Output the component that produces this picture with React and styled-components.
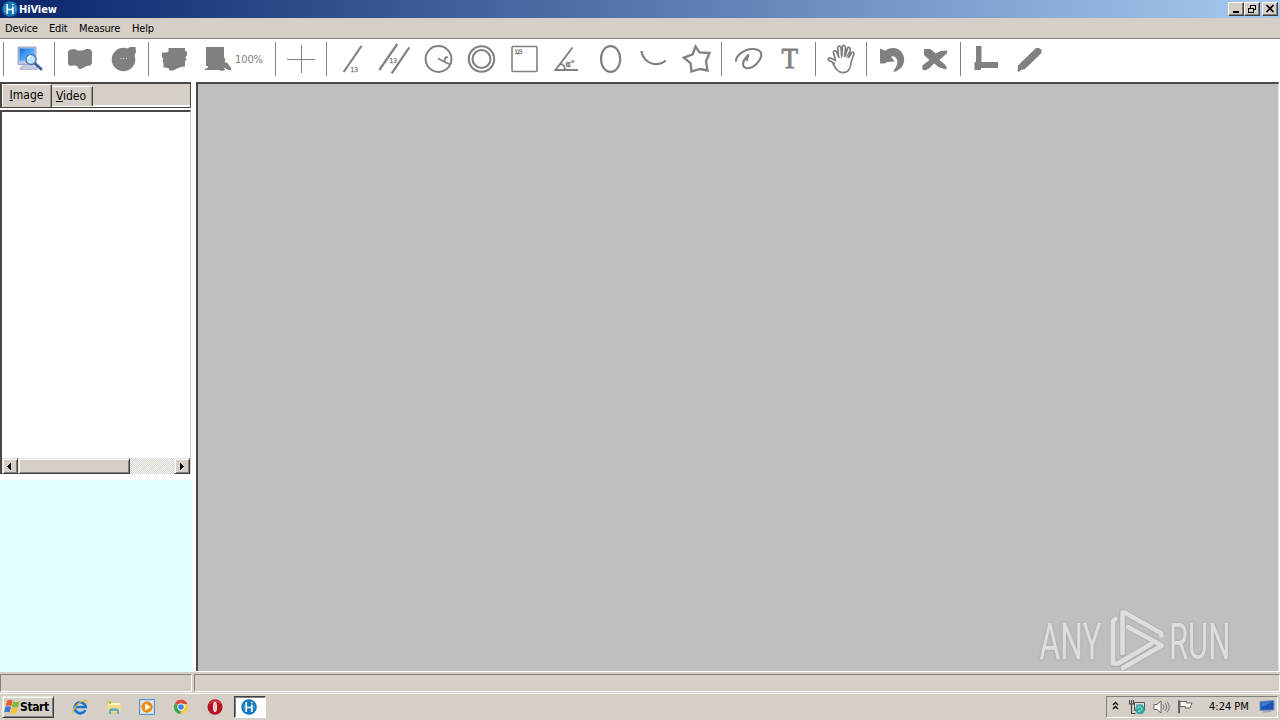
import React from "react";
import styled, { createGlobalStyle, css } from "styled-components";

const FACE = "#d5cfc7";
const INK = "#808080";
const UI = '"DejaVu Sans Condensed", "DejaVu Sans", "Noto Sans", sans-serif';

const Global = createGlobalStyle`
  * { box-sizing: border-box; }
  html, body { margin: 0; padding: 0; }
  body { width: 1280px; height: 720px; overflow: hidden; background: #fff; font-family: ${UI}; font-size: 11px; color: #000; }
  svg { display: block; flex: none; }
`;

const Desktop = styled.div`
  width: 1280px;
  height: 720px;
  display: flex;
  flex-direction: column;
`;

const TitleBar = styled.header`
  height: 18px;
  flex: none;
  display: flex;
  align-items: center;
  padding: 0 2px;
  background: linear-gradient(90deg, #0a246a, #a6caf0);
`;

const Title = styled.h1`
  flex: 1;
  margin: 0 0 0 1px;
  font: bold 11px/16px ${UI};
  padding-top: 1px;
  letter-spacing: -0.1px;
  color: #fff;
`;

const CaptionButton = styled.button`
  width: 16px;
  height: 14px;
  padding: 0;
  margin-left: ${(p) => (p.$gap ? 2 : 0)}px;
  border: 1px solid;
  border-color: #fff #404040 #404040 #fff;
  box-shadow: inset -1px -1px #808080;
  background: ${FACE};
`;

const MenuBar = styled.nav`
  height: 21px;
  flex: none;
  display: flex;
  padding-left: 5px;
  background: ${FACE};
  border-bottom: 1px solid #857d7a;
`;

const MenuItem = styled.span`
  width: ${(p) => p.$w}px;
  line-height: 21px;
  letter-spacing: ${(p) => p.$ls || 0}px;
  white-space: nowrap;
`;

const ToolBar = styled.div`
  height: 43px;
  flex: none;
  display: flex;
  background: #fff;
`;

const Separator = styled.i`
  width: 1px;
  height: 34px;
  margin: 3px 4px 0 3px;
  background: #808080;
`;

const Tool = styled.button`
  display: flex;
  width: ${(p) => (p.$wide ? 76 : 43)}px;
  height: 43px;
  padding: 0;
  border: 0;
  background: none;
  color: ${INK};
  font: 11px/41px ${UI};
`;

const ZoomLabel = styled.span`
  margin-left: -4px;
  letter-spacing: -0.1px;
`;

const Body = styled.main`
  height: 590px;
  flex: none;
  display: flex;
`;

const SidePanel = styled.aside`
  width: 192px;
  margin-right: 4px;
  display: flex;
  flex-direction: column;
`;

const TabStrip = styled.div`
  width: 191px;
  height: 26px;
  display: flex;
  align-items: flex-start;
  border: solid #4b4646;
  border-width: 2px 1px 1px 2px;
  box-shadow: inset 0 -2px #fff;
  background: ${FACE};
`;

const Tab = styled.button`
  width: ${(p) => p.$w}px;
  height: ${(p) => (p.$on ? 23 : 20)}px;
  margin-top: ${(p) => (p.$on ? 0 : 2)}px;
  padding: 0;
  border: 0;
  border-top: 1px solid #fff;
  border-left: ${(p) => (p.$on ? 1 : 0)}px solid #fff;
  border-right: 1px solid #404040;
  box-shadow: inset -1px 0 #9d9892;
  background: ${FACE};
  font: 12px/${(p) => (p.$on ? 20 : 19)}px ${UI};
  padding-bottom: ${(p) => (p.$on ? 3 : 0)}px;
  padding-right: ${(p) => (p.$on ? 1 : 2)}px;
  letter-spacing: 0;
  color: #000;
  text-align: center;
`;

const ListBox = styled.div`
  width: 191px;
  height: 364px;
  margin-top: 2px;
  display: flex;
  flex-direction: column;
  justify-content: flex-end;
  border: solid #4b4646;
  border-width: 2px 1px 0 2px;
  border-right-color: #d4d0c8;
  background: #fff;
`;

const ScrollBar = styled.div`
  height: 16px;
  display: flex;
  background: repeating-conic-gradient(${FACE} 0 25%, #fff 0 50%) 0 0 / 2px 2px;
`;

const raised = css`
  border: 1px solid;
  border-color: #e8e4de #404040 #404040 #e8e4de;
  box-shadow: inset 1px 1px #fff, inset -1px -1px #808080;
  background: ${FACE};
`;

const ScrollButton = styled.button`
  width: 16px;
  height: 16px;
  padding: 0;
  ${raised}
`;

const Thumb = styled.div`
  width: 112px;
  margin-right: auto;
  ${raised}
`;

const Preview = styled.div`
  height: 192px;
  margin-top: auto;
  background: #e0ffff;
`;

const Canvas = styled.section`
  width: 1083px;
  height: 589px;
  border: solid #4b4747;
  border-width: 2px 1px 0 2px;
  border-right-color: #e4e1dc;
  background: #bfbfbf;
`;

const StatusBar = styled.footer`
  height: 21px;
  flex: none;
  display: flex;
  gap: 2px;
  padding: 2px 0 1px;
  background: ${FACE};
`;

const StatusPane = styled.div`
  width: ${(p) => p.$w}px;
  border: 1px solid;
  border-color: #858080 #fff #fff #858080;
`;

const TaskBar = styled.div`
  height: 27px;
  flex: none;
  display: flex;
  align-items: center;
  padding: 0 2px 1px;
  border-top: 1px solid #fff;
  background: ${FACE};
`;

const StartButton = styled.button`
  width: 52px;
  height: 22px;
  padding: 0 0 0 1px;
  margin-right: 18px;
  display: flex;
  align-items: center;
  ${raised}
  font: bold 12px/18px ${UI};
  letter-spacing: -0.4px;
  color: #000;
`;

const Launch = styled.a`
  width: 16px;
  margin-right: ${(p) => p.$gap || 18}px;
`;

const TaskWindow = styled.button`
  width: 32px;
  height: 22px;
  padding: 0 2px 0 0;
  display: flex;
  align-items: center;
  justify-content: center;
  border: 1px solid;
  border-color: #404040 #fff #fff #404040;
  box-shadow: inset 1px 1px #808080;
  background: #fff;
`;

const Tray = styled.div`
  width: 172px;
  height: 22px;
  margin-left: auto;
  padding-left: 5px;
  display: flex;
  align-items: center;
  border: 1px solid;
  border-color: #808080 #fff #fff #808080;
`;

const TrayIcon = styled.span`
  width: ${(p) => p.$w}px;
`;

const Clock = styled.time`
  width: 50px;
  letter-spacing: 0;
  white-space: nowrap;
`;

const Watermark = styled.div`
  position: absolute;
  left: 1030px;
  top: 604px;
`;

const Icon = ({ w = 43, children, ...rest }) => (
  <svg width={w} height="40" viewBox={`0 0 ${w} 40`} fill="none" stroke={INK} strokeWidth="2.500" {...rest}>
    {children}
  </svg>
);

const tiny = { fill: INK, stroke: INK, strokeWidth: 0.3, fontFamily: "DejaVu Sans Condensed, DejaVu Sans, sans-serif" };

const DeviceIcon = () => (
  <Icon stroke="none">
    <defs>
      <linearGradient id="scr" x1="0" y1="0" x2="1" y2="1">
        <stop offset="0" stopColor="#1668d8" /><stop offset=".5" stopColor="#48a5f5" /><stop offset="1" stopColor="#8fd4ff" />
      </linearGradient>
    </defs>
    <path d="M10 8h18v17.500H10z" fill="#bcc4dc" stroke="#8090b8" strokeWidth=".7" />
    <path d="M11.500 9.500h15V22h-15z" fill="url(#scr)" />
    <path d="M15 25.500h9l1 2 4 1v2H12v-2l3-1z" fill="#c6cbe2" stroke="#98a0c4" strokeWidth=".6" />
    <path d="m27.500 25 5.500 5" stroke="#3f5f9c" strokeWidth="3" strokeLinecap="round" />
    <circle cx="23" cy="20.500" r="5" fill="#bde8fc" stroke="#4e74b4" strokeWidth="1.300" />
    <path d="M20 20a3 3 0 0 1 3-3" stroke="#fff" strokeWidth="1.400" fill="none" />
  </Icon>
);

const OpenIcon = () => (
  <Icon stroke="none" fill={INK}>
    <path d="M9 12.500 11 10.500 16 10l2 1.500h6l3-1.500h4l2 2.500V24l-1.500 2.500-4 .5-2.500 1.500L21.500 30h-1.500l-2-3-3-.5-4 .5-2-2z" />
  </Icon>
);
const DiscIcon = () => (
  <Icon stroke="none" fill={INK}>
    <circle cx="21.500" cy="20.500" r="11.800" />
    <path d="M25 10l3-2h5.500l.5 5-2 4z" />
    <path d="M18.500 19h1v1h-1zM21 19h1v1h-1zM24 19h1v1h-1z" fill="#ddd" />
  </Icon>
);
const SaveIcon = () => (
  <Icon stroke="none" fill={INK}>
    <path d="M9 13.500h4.500l2-1V9h16.500v3l2 .5v4l-1.500 1.500 1 3-1.500 1v5.500L28 28l-4 1.500-3.500 2h-4l-1-2.500-5-.5v-4L9.500 22l1-2-1.500-2z" />
  </Icon>
);
const FitIcon = () => (
  <Icon stroke="none" fill={INK}>
    <path d="M10 8h18v10l1.500 3-1 2 3 1 3.500 5v2.500l-4-1-3-2 1 2.500-3 1-3-1H9V30l3-1.500V27h-2z" />
  </Icon>
);
const CrossIcon = () => (
  <Icon strokeWidth="1"><path d="M7 20.500h28M21.500 6v28" /></Icon>
);
const LineIcon = () => (
  <Icon strokeWidth="2.200"><path d="M30.500 7 12.700 33" /><text x="19.500" y="33" fontSize="6.500" {...tiny}>13</text></Icon>
);
const ParallelIcon = () => (
  <Icon strokeWidth="2.200"><path d="M23.300 5 5.300 31M35.300 8.300 17.700 34.300" /><text x="15.500" y="24" fontSize="6.500" {...tiny}>13</text></Icon>
);
const RadiusIcon = () => (
  <Icon strokeWidth="2">
    <circle cx="21.500" cy="20" r="12.900" />
    <path d="m21 19.500 12 6M28.500 18l-1 4M28 19.500c.5-1.500 1.500-1.500 3-1" strokeWidth="1.800" />
  </Icon>
);
const RingIcon = () => (
  <Icon strokeWidth="2.100"><circle cx="21.500" cy="20" r="12.700" /><circle cx="21.500" cy="20" r="9" /></Icon>
);
const SquareIcon = () => (
  <Icon strokeWidth="1.600"><rect x="9" y="7.500" width="25" height="25" rx="1" /><text x="11.500" y="14.500" fontSize="6" textLength="8" {...tiny}>123</text></Icon>
);
const AngleIcon = () => (
  <Icon strokeWidth="1.900">
    <path d="M26.500 8.500 9.500 31H32M14 25c3 0 5 2.500 5 6" />
    <text x="19.500" y="27.500" fontSize="8.500" fontWeight="bold" {...tiny}>α°</text>
  </Icon>
);
const EllipseIcon = () => (
  <Icon strokeWidth="2.200"><ellipse cx="21.600" cy="20" rx="9.600" ry="12.800" /></Icon>
);
const ArcIcon = () => (
  <Icon strokeWidth="2.200"><path d="M9.500 12C10 18 15 24 22 25c5 .5 8.500-.7 11.700-3.500" /></Icon>
);
const StarIcon = () => (
  <Icon strokeWidth="2.300"><path d="M20.500 7.500 24.500 13.500 34.500 14 31 22.300 32.500 31.500 25 30 16.500 32.500 15.700 24.300 8.800 18.700 17.700 15.300z" /></Icon>
);
const LassoIcon = () => (
  <Icon strokeWidth="2.100">
    <path d="M10 22.500C9.500 17 18 10 26.500 10c9 0 10.500 5 7 11C30 27 24.500 30 20 29c-4.500-1-3.500-7.500.5-11l2-2.500-2 6.500" />
  </Icon>
);
const TextIcon = () => (
  <Icon stroke="none">
    <text x="12.500" y="29.300" fontSize="30" textLength="16.500" lengthAdjust="spacingAndGlyphs" fill={INK} stroke={INK} strokeWidth=".8" fontFamily="Liberation Serif, serif">T</text>
  </Icon>
);
const HandIcon = () => (
  <Icon strokeWidth="1.700" strokeLinejoin="round">
    <path d="M14.500 24.500 8.500 21c-1-1 .5-2.500 2-2l5 2.500-2-8c-.3-2 2-2.500 3-.7l2 5-.8-9c0-2.300 2.800-2.300 3.200 0l1 8 .5-9c.3-2 3-1.600 3 .2v9l2-7.500c.7-2 3.200-1 2.800 1l-1.500 8 2.800-4.500c1.200-1.600 3-.5 2.300 1.200l-2.500 7.300c-.3 6-3 11.200-8 11.200-5.500 0-7.800-4.200-10.300-9.200z" />
    <path d="m17 13 2.500 6M21 14l.5 5M25 11l-1 7M29 13l-2.500 6" strokeWidth="1" />
  </Icon>
);
const UndoIcon = () => (
  <Icon stroke="none" fill={INK}>
    <path d="M9 9.500l5 2.200c7-4.500 14-2.700 17 2 3.500 5.500 2.500 11-1 15.300L25 32.500h-3c4.500-5.500 5.500-10 3-13.500-1.500-2-4-2-5-1l4 4.500-7.500.5-3 1.500H9z" />
  </Icon>
);
const DeleteIcon = () => (
  <Icon stroke="none" fill={INK}>
    <path d="M10 10h6.500l5.200 4.500 5-2.500 6-.5.700 2.500-8 7 5.500 4.500 2 3-1 2-6.500-2-5.400-4-5 5-4 2-2.600-1v-4l7-5.500-5.400-5z" />
  </Icon>
);
const CornerIcon = () => (
  <Icon stroke="none" fill={INK}><path d="M11 7h5.500v16H33v6H16v2H9.500v-8H11z" /></Icon>
);
const PencilIcon = () => (
  <Icon stroke="none" fill={INK}><path d="M28 9h3l2.500 2v3L17 30l-4 1-2 2-1.500-1 .5-5.500z" /></Icon>
);

const GROUPS = [
  [DeviceIcon],
  [OpenIcon, DiscIcon],
  [SaveIcon, FitIcon],
  [CrossIcon],
  [LineIcon, ParallelIcon, RadiusIcon, RingIcon, SquareIcon, AngleIcon, EllipseIcon, ArcIcon, StarIcon],
  [LassoIcon, TextIcon],
  [HandIcon],
  [UndoIcon, DeleteIcon],
  [CornerIcon, PencilIcon],
];

const AppLogo = () => (
  <svg width="16" height="16" viewBox="0 0 16 16">
    <circle cx="8" cy="8" r="7.800" fill="#1476b8" />
    <path d="M5.200 3v10M10.800 5.500V13M5.200 8.500h5.600M10.800 2.700v1.600" stroke="#fff" strokeWidth="1.700" fill="none" />
    <path d="M3 5.500v5M13 5.500v5" stroke="#69bce8" strokeWidth=".8" />
  </svg>
);

const WindowsFlag = () => (
  <svg width="16" height="16" viewBox="0 0 16 16">
    <path d="M3 1.700c2-1.200 3.700-1 5.700 0L7.300 7.300c-1.700-1-3.600-1-5.600 0z" fill="#e8602c" />
    <path d="M9.200 2.500c2 1 3.800 1 6.500-.5l-1.600 5.800c-2.200 1-4.200 1-6.200 0z" fill="#7fb83a" />
    <path d="M1.500 8c2-1 3.600-1 5.500 0l-1.500 5.500c-1.600-1-3.500-1-5.500 0z" fill="#3878cc" />
    <path d="M7.700 8.500c2 1 3.900 1 6.100 0L12.300 14c-2 1-4 1-6 0z" fill="#f6c330" />
  </svg>
);

const ExplorerIcon = () => (
  <svg width="16" height="16" viewBox="0 0 16 16" fill="none">
    <path d="M13.300 11A5.500 5.500 0 1 1 13.700 8H4" stroke="#1675cc" strokeWidth="2.700" />
    <path d="M12.800 10.500A5.500 5.500 0 0 1 3 7" stroke="#57b7ee" strokeWidth=".8" />
    <path d="M1.300 14.500C-.5 12 5 3.800 11.500 1.500c4-1.200 3.500 2 2.500 3.500" stroke="#e6b72f" strokeWidth="1.300" />
  </svg>
);
const FolderIcon = () => (
  <svg width="16" height="16" viewBox="0 0 16 16">
    <path d="M1 2h5l1 1.500h7V14H1z" fill="#e9c75f" />
    <path d="M2 4h12v5H2z" fill="#fff6c8" /><path d="M1 6h14v7.500H1z" fill="#f3dc86" />
    <path d="M3 15v-4l1.500-1.500h7L13 11v4h-2v-3H5v3z" fill="#59a9d9" />
    <path d="M3 4h2" stroke="#45a45c" />
  </svg>
);
const PlayerIcon = () => (
  <svg width="17" height="16" viewBox="0 0 17 16">
    <path d="M.5.500h15v15H.5z" fill="#b9d7f2" stroke="#5b92ca" />
    <path d="M2 2h12v12H2z" fill="#dcecf8" />
    <circle cx="8" cy="8" r="5.700" fill="#f28a13" /><path d="m6.200 4.600 5.600 3.400-5.600 3.400z" fill="#fff" />
  </svg>
);
const ChromeIcon = () => (
  <svg width="16" height="16" viewBox="0 0 16 16">
    <path d="M8 8 2 4.200A7 7 0 0 1 14.500 5H8z" fill="#de4936" />
    <path d="M8 8 14.500 5A7 7 0 0 1 7.500 15z" fill="#f8cc35" />
    <path d="M8 8 7.500 15A7 7 0 0 1 2 4.200z" fill="#3ba357" />
    <circle cx="8" cy="8" r="3.700" fill="#fff" /><circle cx="8" cy="8" r="2.800" fill="#3f85e8" />
  </svg>
);
const OperaIcon = () => (
  <svg width="16" height="16" viewBox="0 0 16 16">
    <ellipse cx="8" cy="8" rx="7.500" ry="7.700" fill="#b8131e" />
    <path d="M2 5a7 6 0 0 1 12 0" fill="none" stroke="#df5360" />
    <ellipse cx="8" cy="8" rx="2" ry="5.200" fill="#f3e8e8" /><ellipse cx="8" cy="8" rx=".4" ry="4" fill="#d88" />
  </svg>
);

const Glyph = ({ children }) => (
  <svg width="14" height="12" viewBox="0 0 14 12" fill="none" stroke="#000" shapeRendering="crispEdges">{children}</svg>
);

export default function App() {
  return (
    <Desktop>
      <Global />
      <TitleBar>
        <AppLogo />
        <Title>HiView</Title>
        <CaptionButton><Glyph><path d="M4 9h6" strokeWidth="2" /></Glyph></CaptionButton>
        <CaptionButton>
          <Glyph><path d="M5.500 4.500V2.500h5v4h-2M5 2h6M3.500 5.500h5v4h-5zM3 5h6" /></Glyph>
        </CaptionButton>
        <CaptionButton $gap>
          <Glyph><path d="m3.500 2 7 7M10.500 2l-7 7" strokeWidth="1.700" shapeRendering="auto" /></Glyph>
        </CaptionButton>
      </TitleBar>
      <MenuBar>
        <MenuItem $w={44} $ls={-0.2}>Device</MenuItem>
        <MenuItem $w={30} $ls={-0.2}>Edit</MenuItem>
        <MenuItem $w={53} $ls={-0.1}>Measure</MenuItem>
        <MenuItem $w={30} $ls={-0.2}>Help</MenuItem>
      </MenuBar>
      <ToolBar>
        {GROUPS.map((group, g) => (
          <React.Fragment key={g}>
            <Separator />
            {group.map((Art, i) => (
              <Tool key={i} $wide={Art === FitIcon}>
                <Art />
                {Art === FitIcon && <ZoomLabel>100%</ZoomLabel>}
              </Tool>
            ))}
          </React.Fragment>
        ))}
      </ToolBar>
      <Body>
        <SidePanel>
          <TabStrip>
            <Tab $on $w={50}><u>I</u>mage</Tab>
            <Tab $w={41}><u>V</u>ideo</Tab>
          </TabStrip>
          <ListBox>
            <ScrollBar>
              <ScrollButton><Glyph><path d="M8 3v7L4 6.500z" fill="#000" stroke="none" /></Glyph></ScrollButton>
              <Thumb />
              <ScrollButton><Glyph><path d="M5 3v7l4-3.500z" fill="#000" stroke="none" /></Glyph></ScrollButton>
            </ScrollBar>
          </ListBox>
          <Preview />
        </SidePanel>
        <Canvas />
      </Body>
      <StatusBar>
        <StatusPane $w={192} />
        <StatusPane $w={1086} />
      </StatusBar>
      <TaskBar>
        <StartButton><WindowsFlag />Start</StartButton>
        <Launch><ExplorerIcon /></Launch>
        <Launch $gap={17}><FolderIcon /></Launch>
        <Launch><PlayerIcon /></Launch>
        <Launch><ChromeIcon /></Launch>
        <Launch $gap={11}><OperaIcon /></Launch>
        <TaskWindow><AppLogo /></TaskWindow>
        <Tray>
          <TrayIcon $w={17}>
            <svg width="8" height="14" viewBox="0 0 8 14" fill="none" stroke="#000" strokeWidth="1.300"><path d="m1 5 2.500-2.500L6 5M1 9l2.500-2.500L6 9" /></svg>
          </TrayIcon>
          <TrayIcon $w={24}>
            <svg width="17" height="16" viewBox="0 0 17 16">
              <path d="M5.500 3.500h10v8h-10z" fill="#d8e4e4" stroke="#555" /><path d="M7 5h7v5H7z" fill="#8cb8bc" />
              <path d="M.5 1v4h4V1M2.500 1v13.500h4" fill="none" stroke="#444" strokeWidth="1.100" />
              <circle cx="11" cy="10.500" r="4.800" fill="#35a5a5" /><path d="M8 9.500c2-3 5-1 5 0s-2 3-4 3" fill="none" stroke="#b5eeee" />
            </svg>
          </TrayIcon>
          <TrayIcon $w={24}>
            <svg width="17" height="16" viewBox="0 0 17 16" fill="none" stroke="#777">
              <path d="M1 5.500h3L8 2v12L4 10.500H1z" fill="#fff" stroke="#666" /><path d="M10 5.500q2 2.500 0 5M12 4q3.500 4 0 8M14 2.500q4.500 5.500 0 11" />
            </svg>
          </TrayIcon>
          <TrayIcon $w={32}>
            <svg width="17" height="16" viewBox="0 0 17 16" fill="#fff" stroke="#666">
              <path d="M1.500 1.500h1V14h-1z" /><path d="M3 2.500h6.500V4h5.500l-2 5H8.500V7.500H3z" />
            </svg>
          </TrayIcon>
          <Clock>4:24 PM</Clock>
          <svg width="16" height="15" viewBox="0 0 16 15">
            <path d="M1 2.500 15 1.500V11L1 11.500z" fill="#1c51b5" stroke="#7a92bd" /><path d="M2 3.500 14 2.500 3 8z" fill="#397ad5" />
            <path d="m4 13 8-.5" stroke="#999" />
          </svg>
        </Tray>
      </TaskBar>
      <Watermark>
        <svg width="240" height="90" viewBox="0 0 240 90" fill="none">
          <g fontFamily="Roboto, sans-serif" fontSize="50" fontWeight="400" fill="#dedede" style={{ filter: "drop-shadow(0 0 1.500px rgba(120,120,120,.4))" }}>
            <text transform="translate(9.500 55) scale(.635 1)">ANY</text>
            <text transform="translate(139 55) scale(.62 1)">RUN</text>
          </g>
          <g strokeLinejoin="round" strokeLinecap="round">
            <g stroke="#999" strokeWidth="6.500" opacity=".4">
              <path d="M85.500 15 83 17V60h5L121 40" />
              <path d="M92.500 50V8.500h2L131.500 29.500" />
              <path d="M98 23 132 41.500 93 64" />
            </g>
            <g stroke="#dedede" strokeWidth="4.600">
              <path d="M85.500 15 83 17V59.500h5L121 40" />
              <path d="M92.500 49V8.500h2L131.500 29.500v2" />
              <path d="M98 23 132 41.500 93 64" />
            </g>
          </g>
        </svg>
      </Watermark>
    </Desktop>
  );
}
